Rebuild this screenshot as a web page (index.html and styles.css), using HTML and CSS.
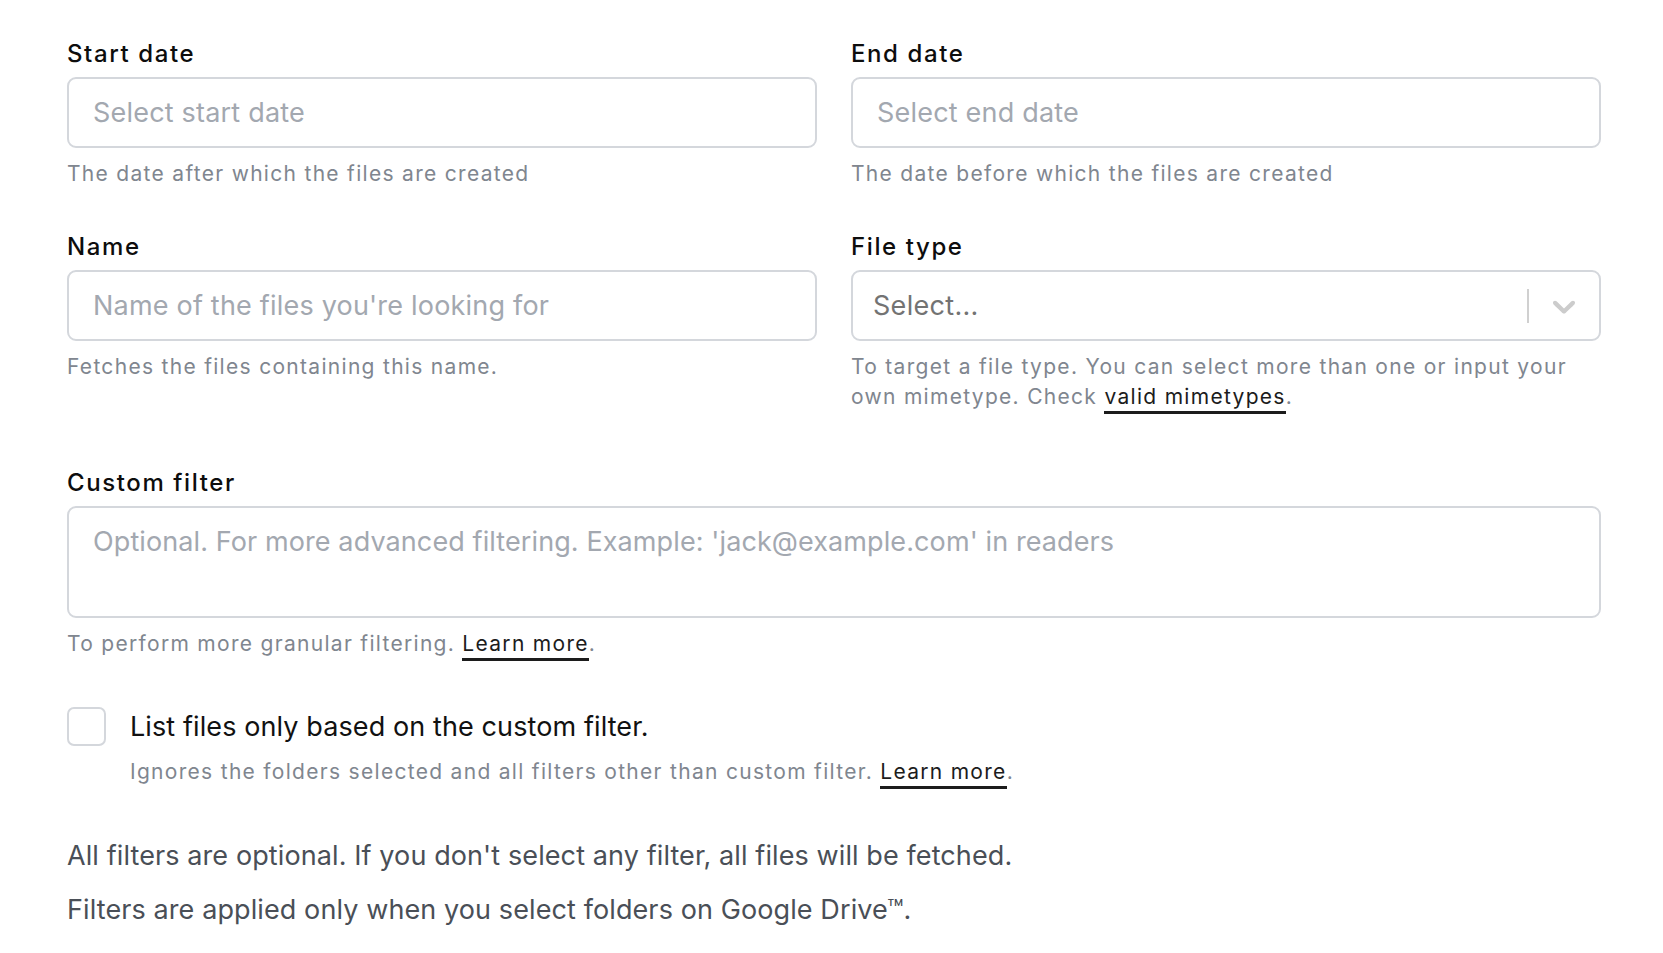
FILE: index.html
```html
<!DOCTYPE html>
<html lang="en">
<head>
<meta charset="utf-8">
<title>Filters</title>
<link rel="stylesheet" href="styles.css">
</head>
<body>
<div class="form">
  <div class="grid">
    <div class="field">
      <label class="label">Start date</label>
      <input class="input" type="text" placeholder="Select start date">
      <div class="help">The date after which the files are created</div>
    </div>
    <div class="field">
      <label class="label">End date</label>
      <input class="input" type="text" placeholder="Select end date">
      <div class="help">The date before which the files are created</div>
    </div>
    <div class="field">
      <label class="label">Name</label>
      <input class="input" type="text" placeholder="Name of the files you're looking for">
      <div class="help">Fetches the files containing this name.</div>
    </div>
    <div class="field">
      <label class="label">File type</label>
      <div class="select">
        <div class="select-value">Select...</div>
        <span class="select-sep"></span>
        <div class="select-indicator">
          <svg class="chevron" viewBox="0 0 20 20" width="38" height="38" aria-hidden="true"><path d="M4.516 7.548c0.436-0.446 1.043-0.481 1.576 0l3.908 3.747 3.908-3.747c0.533-0.481 1.141-0.446 1.574 0 0.436 0.445 0.408 1.197 0 1.615-0.406 0.418-4.695 4.502-4.695 4.502-0.217 0.223-0.502 0.335-0.787 0.335s-0.57-0.112-0.789-0.335c0 0-4.287-4.084-4.695-4.502s-0.436-1.170 0-1.615z"/></svg>
        </div>
      </div>
      <div class="help">To target a file type. You can select more than one or input your own mimetype. Check <a class="link" href="#">valid mimetypes</a>.</div>
    </div>
  </div>

  <div class="field custom">
    <label class="label">Custom filter</label>
    <textarea class="input textarea" placeholder="Optional. For more advanced filtering. Example: 'jack@example.com' in readers"></textarea>
    <div class="help">To perform more granular filtering. <a class="link" href="#">Learn more</a>.</div>
  </div>

  <div class="check">
    <div class="check-row">
      <span class="checkbox"></span>
      <span class="check-label">List files only based on the custom filter.</span>
    </div>
    <div class="help check-help">Ignores the folders selected and all filters other than custom filter. <a class="link" href="#">Learn more</a>.</div>
  </div>

  <p class="note">All filters are optional. If you don't select any filter, all files will be fetched.</p>
  <p class="note">Filters are applied only when you select folders on Google Drive™.</p>
</div>
</body>
</html>
```

FILE: styles.css
```css
* { box-sizing: border-box; }

html, body {
  margin: 0;
  padding: 0;
  background: #ffffff;
}

body {
  font-family: Inter, "Liberation Sans", sans-serif;
  color: #111111;
}

.form {
  width: 1534px;
  margin-left: 67px;
  padding-top: 38px;
}

.grid {
  display: grid;
  grid-template-columns: 1fr 1fr;
  column-gap: 34px;
  row-gap: 42px;
}

.field {
  display: flex;
  flex-direction: column;
  min-width: 0;
}

.label {
  display: block;
  font-size: 24px;
  line-height: 32px;
  font-weight: 500;
  letter-spacing: 1.6px;
  color: #0d0d0d;
  margin-bottom: 7px;
}

.input {
  display: block;
  width: 100%;
  height: 71px;
  border: 2px solid #d4d7dc;
  border-radius: 9px;
  padding: 0 24px;
  font-family: inherit;
  font-size: 27px;
  letter-spacing: 0.2px;
  color: #111;
  background: #fff;
  outline: none;
}

.input::placeholder {
  color: #a3a8b0;
  opacity: 1;
}

.textarea {
  height: 112px;
  padding: 17px 24px;
  resize: none;
  line-height: normal;
  letter-spacing: 0.1px;
}

.help {
  margin-top: 11px;
  font-size: 21px;
  line-height: 30px;
  letter-spacing: 1.3px;
  color: #80868f;
}

.link {
  color: #1c1c1c;
  text-decoration: none;
  border-bottom: 3px solid #1c1c1c;
  padding-bottom: 2px;
}

.select {
  display: flex;
  align-items: center;
  height: 71px;
  border: 2px solid #d4d7dc;
  border-radius: 9px;
  background: #fff;
}

.select-value {
  flex: 1;
  padding-left: 20px;
  font-size: 27px;
  letter-spacing: 0.3px;
  color: #737373;
}

.select-sep {
  width: 2px;
  height: 34px;
  background: #d0d0d0;
}

.select-indicator {
  display: flex;
  align-items: center;
  padding: 0 16px;
}

.chevron {
  display: block;
  fill: #cccccc;
}

.custom {
  margin-top: 55px;
}

.check {
  margin-top: 48px;
}

.check-row {
  display: flex;
  align-items: center;
  gap: 24px;
}

.checkbox {
  flex: none;
  width: 39px;
  height: 39px;
  border: 2px solid #d4d7dc;
  border-radius: 7px;
  background: #fff;
}

.check-label {
  font-size: 27px;
  line-height: 39px;
  letter-spacing: 0.1px;
  color: #111111;
}

.check-help {
  margin-top: 11px;
  padding-left: 63px;
}

.note {
  margin: 0;
  font-size: 27px;
  line-height: 36px;
  letter-spacing: 0.1px;
  color: #4a4f57;
}

.check + .note {
  margin-top: 51px;
}

.note + .note {
  margin-top: 18px;
}
```
